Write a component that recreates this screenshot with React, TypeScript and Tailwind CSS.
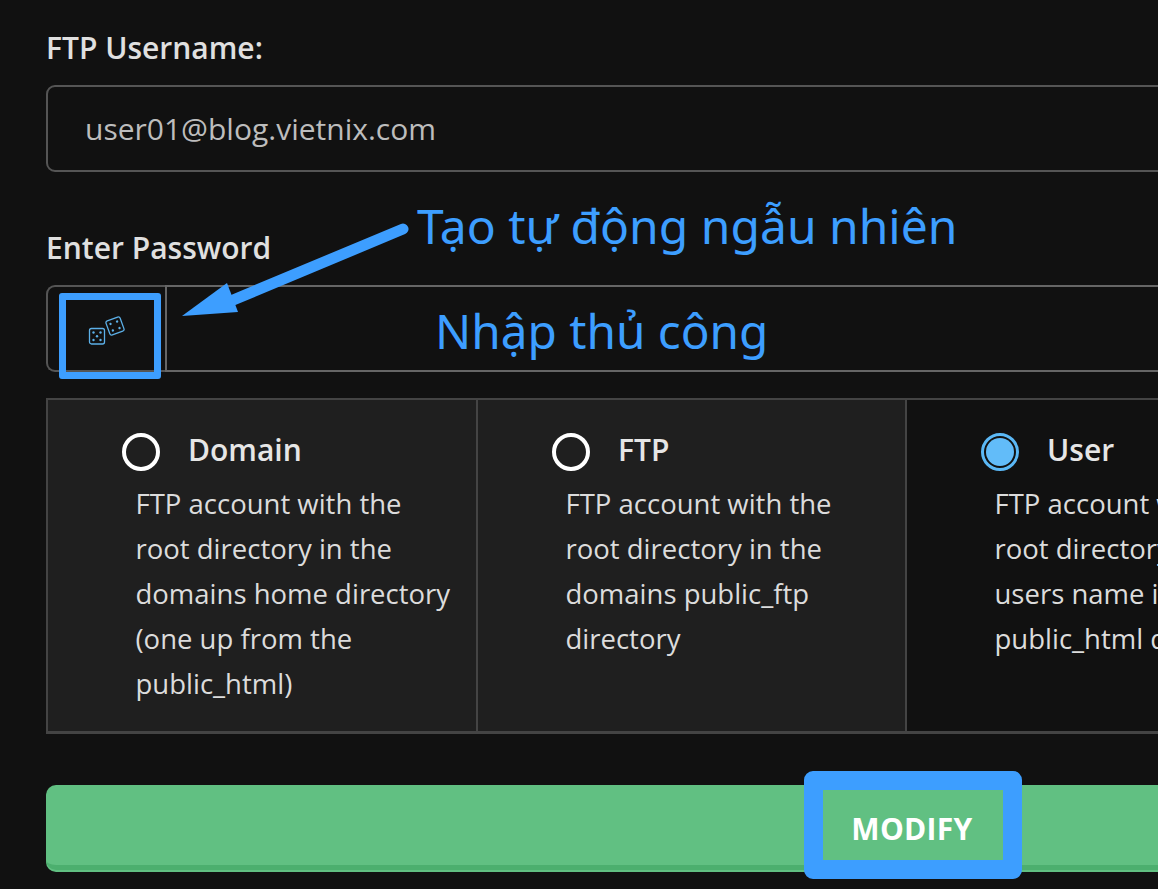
function Radio({ checked }: { checked?: boolean }) {
  return checked ? (
    <span className="flex h-[38px] w-[38px] shrink-0 items-center justify-center rounded-full border-[3px] border-[#5bb8f5]">
      <span className="h-[28px] w-[28px] rounded-full bg-[#62bcf9]" />
    </span>
  ) : (
    <span className="h-[38px] w-[38px] shrink-0 rounded-full border-[4px] border-white" />
  );
}

function Card({ title, lines, checked, dark, narrow }: { title: string; lines: string[]; checked?: boolean; dark?: boolean; narrow?: boolean }) {
  return (
    <div className={`h-full shrink-0 border-r-2 border-[#444] pl-[74px] pt-[33px] ${narrow ? "w-[429px]" : "w-[430px]"} ${dark ? "bg-[#111111]" : "bg-[#1f1f1f]"}`}>
      <div className="flex h-[38px] items-center gap-[28px]">
        <Radio checked={checked} />
        <span className="pb-[4px] text-[30px] font-semibold leading-[38px] text-[#e6e6e6]">{title}</span>
      </div>
      <div className="mt-[10px] pl-[13.5px] text-[27.5px] leading-[45px] text-[#dcdcdc]">
        {lines.map((l) => (
          <div key={l} className="whitespace-nowrap">{l}</div>
        ))}
      </div>
    </div>
  );
}

function Dice() {
  return (
    <svg width="38" height="30" viewBox="0 0 38 30" fill="none" stroke="#5cb0e8" strokeWidth="1.3">
      <rect x="1.5" y="12.5" width="15" height="15.5" rx="2" />
      <g fill="#5cb0e8" stroke="none">
        <circle cx="5.5" cy="16.5" r="1.2" />
        <circle cx="12.5" cy="16.5" r="1.2" />
        <circle cx="9" cy="20.2" r="1.2" />
        <circle cx="5.5" cy="24" r="1.2" />
        <circle cx="12.5" cy="24" r="1.2" />
      </g>
      <g transform="rotate(-20 27 10)">
        <rect x="19.5" y="2.5" width="15" height="15" rx="2" />
        <g fill="#5cb0e8" stroke="none">
          <circle cx="23.5" cy="6.5" r="1.2" />
          <circle cx="30.5" cy="6.5" r="1.2" />
          <circle cx="23.5" cy="13.5" r="1.2" />
          <circle cx="30.5" cy="13.5" r="1.2" />
        </g>
      </g>
    </svg>
  );
}

export default function App() {
  return (
    <div className="relative h-[889px] w-full overflow-hidden bg-[#111111]">
      <div className="ml-[46px] w-[1732px] pt-[30px] font-['Open_Sans','Noto_Sans',sans-serif]">
        <label className="block text-[30px] font-semibold leading-[36px] text-[#e0e0e0]">FTP Username:</label>
        <div className="mt-[19px] flex h-[87px] items-center rounded-[9px] border-2 border-[#555] pl-[37px] text-[30px] text-[#bdbdbd]">
          user01@blog.vietnix.com
        </div>

        <label className="mt-[58px] block text-[30px] font-semibold leading-[36px] text-[#e0e0e0]">Enter Password</label>
        <div className="mt-[19px] flex h-[87px]">
          <div className="flex w-[119px] items-center rounded-l-[9px] border-y-2 border-l-2 border-[#555] pl-[40px] pt-[5px]">
            <Dice />
          </div>
          <div className="flex-1 border-2 border-[#666]" />
        </div>

        <div className="mt-[26px] flex h-[336px] border-y-2 border-b-[3px] border-l-2 border-[#444]">
          <Card
            title="Domain"
            lines={["FTP account with the", "root directory in the", "domains home directory", "(one up from the", "public_html)"]}
          />
          <Card
            narrow
            title="FTP"
            lines={["FTP account with the", "root directory in the", "domains public_ftp", "directory"]}
          />
          <Card
            dark
            checked
            title="User"
            lines={["FTP account with the", "root directory in the", "users name in the", "public_html directory"]}
          />
        </div>

        <button className="mt-[51px] flex h-[85px] w-[1732px] items-center justify-center rounded-[10px] border-b-[5px] border-b-[#4caf6e] bg-[#61c082] pt-[6px] text-[30px] font-bold tracking-[0.3px] text-white shadow-[0_2px_0_#61c082]">
          MODIFY
        </button>
      </div>

      {/* annotations */}
      <div className="absolute left-[59px] top-[293px] h-[86px] w-[102px] rounded-[3px] border-[7px] border-[#3d9eff]" />
      <div className="absolute left-[804px] top-[771px] h-[108px] w-[218px] rounded-[9px] border-[19px] border-[#3d9eff]" />
      <svg className="absolute left-0 top-0" width="1158" height="889" fill="none">
        <path d="M403 229 L226 303" stroke="#3d9eff" strokeWidth="11" strokeLinecap="round" />
        <path d="M182 316 L227 283 L238 312 Z" fill="#3d9eff" />
      </svg>
      <div className="absolute left-[417px] top-[194px] whitespace-nowrap font-['Noto_Sans','Open_Sans',sans-serif] text-[48px] leading-[64px] text-[#3d9eff]">
        Tạo tự động ngẫu nhiên
      </div>
      <div className="absolute left-[435px] top-[299px] whitespace-nowrap font-['Noto_Sans','Open_Sans',sans-serif] text-[47.7px] leading-[64px] text-[#3d9eff]">
        Nhập thủ công
      </div>
    </div>
  );
}
